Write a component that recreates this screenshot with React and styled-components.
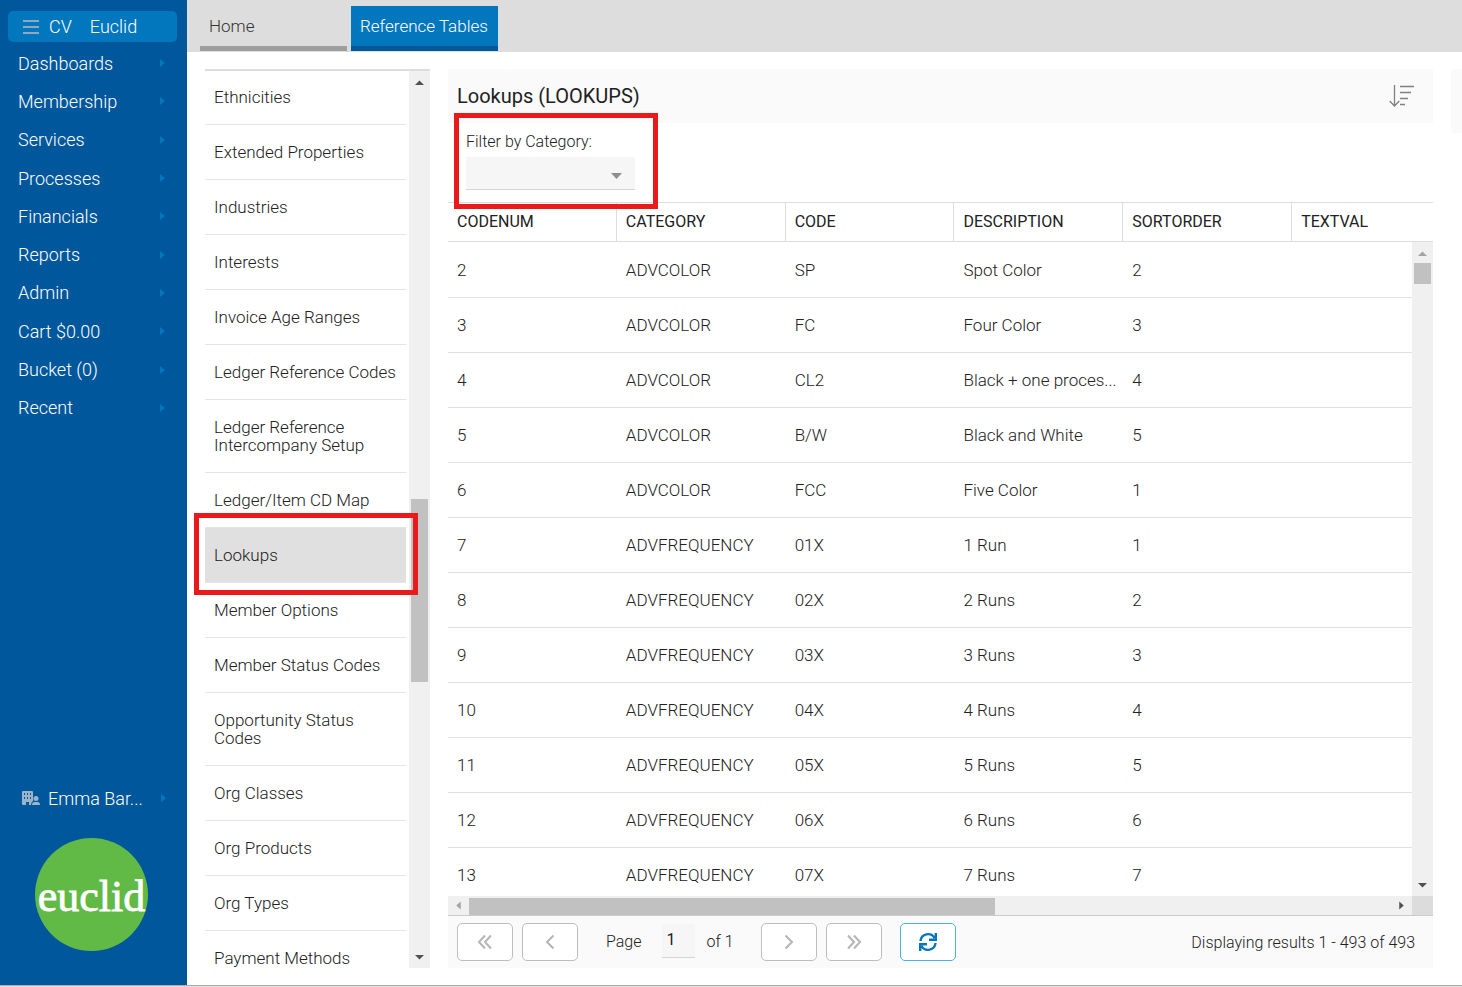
import React from "react";
import styled, { createGlobalStyle } from "styled-components";

const Global = createGlobalStyle`
  * { box-sizing: border-box; }
  body { margin: 0; background: #e6dcdc; color: #212121; font-family: Roboto, "Liberation Sans", sans-serif; font-size: 17px; font-weight: 300; }
  button, input, select { font: inherit; color: inherit; margin: 0; padding: 0; border: 0; background: none; border-radius: 0; }
  button { cursor: pointer; }
  a { color: inherit; text-decoration: none; }
  ul { list-style: none; margin: 0; padding: 0; }
`;

const Shell = styled.div`
  display: flex;
  height: calc(100vh - 1px);
  overflow: hidden;
  background: #fff;
  border-bottom: 1px solid #b0abab;
`;

const Sidebar = styled.nav`
  flex: 0 0 187px;
  display: flex;
  flex-direction: column;
  padding: 11px 10px 34px 8px;
  background: #01579b;
  color: #fff;
  font-size: 18px;
`;

const Brand = styled.button`
  display: flex;
  align-items: center;
  height: 31px;
  padding-left: 15px;
  border-radius: 5px;
  background: #0277bd;
  & > svg { margin-right: 10px; }
  & > span + span { margin-left: 18px; }
`;

const Menu = styled.ul`
  display: grid;
  grid-template-rows: repeat(10, 1fr);
  height: 383px;
  margin-top: 2px;
`;

const MenuLink = styled.a`
  display: flex;
  align-items: center;
  height: 100%;
  padding: 0 12px 0 10px;
  & > span { flex: 1; }
`;

const UserLink = styled(MenuLink)`
  height: 38px;
  margin-top: auto;
  padding: 0 11px 0 14px;
  & > svg:first-child { margin-right: 8px; }
`;

const Logo = styled.svg`
  display: block;
  flex: none;
  width: 113px;
  height: 113px;
  margin: 21px 0 0 27px;
`;

const Content = styled.main`
  flex: 1;
  min-width: 0;
  display: flex;
  flex-direction: column;
`;

const TabBar = styled.div`
  display: flex;
  flex: 0 0 52px;
  gap: 4px;
  padding: 6px 13px 1px;
  background: #ddd;
`;

const Tab = styled.button`
  width: 147px;
  padding: 0 9px;
  text-align: left;
  white-space: nowrap;
  border-bottom: 5px solid ${(p) => (p.$active ? "#01579b" : "#9e9e9e")};
  background: ${(p) => (p.$active ? "#0277bd" : "transparent")};
  color: ${(p) => (p.$active ? "#fff" : "#333")};
`;

const Workspace = styled.div`
  flex: 1;
  min-height: 0;
  display: flex;
  gap: 18px;
  padding: 17px 0 17px 18px;
`;

const ListPanel = styled.aside`
  position: relative;
  flex: 0 0 225px;
  display: flex;
  border-top: 2px solid #ddd;
`;

const TableList = styled.ul`
  flex: 1;
  overflow: hidden;
  margin-right: 3px;
  & > li:first-child > a { padding-top: 17px; }
`;

const ListLink = styled.a`
  display: block;
  padding: 18px 9px;
  line-height: 18px;
  border-bottom: 1px solid #e4e4e4;
  background: ${(p) => (p.$active ? "#e0e0e0" : "transparent")};
`;

const Track = styled.div`
  flex: 0 0 21px;
  display: flex;
  flex-direction: column;
  align-items: center;
  justify-content: space-between;
  background: #f0f0f0;
`;

const Arrow = styled.svg`
  flex: none;
  display: block;
  width: 21px;
  height: 21px;
  fill: ${(p) => (p.$dim ? "#a3a3a3" : "#505050")};
`;

const Travel = styled.div`
  flex: 1;
  width: 17px;
  padding-top: ${(p) => p.$offset}px;
`;

const Thumb = styled.div`
  height: ${(p) => p.$size}px;
  background: #c1c1c1;
`;

const Panel = styled.section`
  flex: 1;
  min-width: 0;
  display: flex;
  flex-direction: column;
`;

const NextPanel = styled.div`
  flex: 0 0 11px;
  height: 64px;
  background: #fafafa;
`;

const PanelHeader = styled.header`
  flex: 0 0 54px;
  display: flex;
  align-items: center;
  justify-content: space-between;
  padding: 0 18px 0 9px;
  background: #fafafa;
`;

const SortButton = styled.button`
  display: grid;
  place-items: center;
`;

const Title = styled.h1`
  margin: 0;
  font-size: 20px;
  font-weight: 400;
`;

const Filter = styled.div`
  position: relative;
  flex: 0 0 79px;
  display: flex;
  flex-direction: column;
  align-items: flex-start;
  gap: 5px;
  padding: 9px 18px 0;
  & > label { font-size: 16px; line-height: 20px; }
`;

const SelectBox = styled.div`
  position: relative;
  width: 169px;
  & > select { display: block; width: 100%; height: 33px; appearance: none; background: #f6f6f6; border-bottom: 1px solid #d5d5d5; }
  & > svg { position: absolute; right: 13px; top: 16px; pointer-events: none; }
`;

const Highlight = styled.div`
  position: absolute;
  z-index: 3;
  top: ${(p) => p.$top}px;
  left: ${(p) => p.$left}px;
  width: ${(p) => p.$width}px;
  height: ${(p) => p.$height}px;
  border: 5px solid #e81a1c;
  pointer-events: none;
`;

const GridViewport = styled.div`
  position: relative;
  flex: 1;
  min-height: 0;
  overflow: hidden;
  border-top: 1px solid #ddd;
`;

const DataTable = styled.table`
  width: calc(100% + 28px);
  table-layout: fixed;
  border-collapse: separate;
  border-spacing: 0;
`;

const HeadCell = styled.th`
  height: 39px;
  padding: 0 9px 2px;
  text-align: left;
  font-size: 16px;
  font-weight: 400;
  border-bottom: 1px solid #ddd;
  border-right: 1px solid #ddd;
`;

const Cell = styled.td`
  height: 55px;
  padding: 0 0 0 9px;
  white-space: nowrap;
  border-bottom: 1px solid #e0e0e0;
  tr:first-child > & { height: 56px; padding-top: 1px; }
`;

const VerticalScroll = styled(Track)`
  position: absolute;
  top: 39px;
  right: 0;
  bottom: 0;
  width: 21px;
`;

const HorizontalScroll = styled.div`
  flex: 0 0 20px;
  display: flex;
  align-items: stretch;
  background: #f0f0f0;
  border-bottom: 1px solid #ccc;
  & > svg { height: 19px; }
`;

const HorizontalTravel = styled.div`
  flex: 1;
  padding-top: 2px;
`;

const HorizontalThumb = styled.div`
  width: 57%;
  height: 17px;
  background: #c1c1c1;
`;

const Corner = styled.div`
  flex: 0 0 21px;
  background: #dcdcdc;
`;

const Pager = styled.footer`
  flex: 0 0 52px;
  display: flex;
  align-items: center;
  padding: 0 18px 0 9px;
  background: #fafafa;
  font-size: 16px;
`;

const ButtonPair = styled.div`
  display: flex;
  gap: 9px;
`;

const PagerButton = styled.button`
  display: grid;
  place-items: center;
  width: 56px;
  height: 38px;
  border: 1px solid ${(p) => (p.$primary ? "#4db1e2" : "#bdbdbd")};
  border-radius: 5px;
  background: #fff;
  color: ${(p) => (p.$primary ? "#0277bd" : "#b5b5b5")};
`;

const PageField = styled.div`
  display: flex;
  align-items: center;
  margin: 0 28px 2px;
  & > input { width: 33px; height: 34px; margin: 0 12px 0 20px; padding: 0 0 2px 5px; background: #f6f6f6; border-bottom: 1px solid #d5d5d5; font-weight: 400; }
  & > span { margin-right: -1px; }
`;

const Refresh = styled.div`
  margin-left: 18px;
`;

const Results = styled.span`
  margin-left: auto;
`;

const Caret = () => (
  <svg width="5" height="8" viewBox="0 0 5 8" aria-hidden="true"><path d="M0 0L5 4L0 8Z" fill="#0277bd" /></svg>
);

const arrows = {
  up: "M6 14L10.5 9.5L15 14Z",
  down: "M6 8L10.5 12.5L15 8Z",
  left: "M13 6L8 10.5L13 15Z",
  right: "M8 6L13 10.5L8 15Z",
};

const ScrollArrow = ({ dir, dim }) => (
  <Arrow $dim={dim} viewBox="0 0 21 21" aria-hidden="true"><path d={arrows[dir]} /></Arrow>
);

const Chevron = ({ double, flip }) => (
  <svg width="16" height="16" viewBox="0 0 16 16" fill="none" stroke="currentColor" strokeWidth="2" aria-hidden="true">
    <g transform={flip ? "rotate(180 8 8)" : undefined}>
      {double ? <path d="M8 1.5L2 8L8 14.5M14 1.5L8 8L14 14.5" /> : <path d="M11.500 1.5L5 8L11.500 14.5" />}
    </g>
  </svg>
);

const menu = ["Dashboards", "Membership", "Services", "Processes", "Financials", "Reports", "Admin", "Cart $0.00", "Bucket (0)", "Recent"];

const tables = [
  "Ethnicities", "Extended Properties", "Industries", "Interests", "Invoice Age Ranges", "Ledger Reference Codes",
  "Ledger Reference Intercompany Setup", "Ledger/Item CD Map", "Lookups", "Member Options", "Member Status Codes",
  "Opportunity Status Codes", "Org Classes", "Org Products", "Org Types", "Payment Methods",
];

const columns = ["CODENUM", "CATEGORY", "CODE", "DESCRIPTION", "SORTORDER", "TEXTVAL"];

const rows = [
  ["2", "ADVCOLOR", "SP", "Spot Color", "2"],
  ["3", "ADVCOLOR", "FC", "Four Color", "3"],
  ["4", "ADVCOLOR", "CL2", "Black + one proces...", "4"],
  ["5", "ADVCOLOR", "B/W", "Black and White", "5"],
  ["6", "ADVCOLOR", "FCC", "Five Color", "1"],
  ["7", "ADVFREQUENCY", "01X", "1 Run", "1"],
  ["8", "ADVFREQUENCY", "02X", "2 Runs", "2"],
  ["9", "ADVFREQUENCY", "03X", "3 Runs", "3"],
  ["10", "ADVFREQUENCY", "04X", "4 Runs", "4"],
  ["11", "ADVFREQUENCY", "05X", "5 Runs", "5"],
  ["12", "ADVFREQUENCY", "06X", "6 Runs", "6"],
  ["13", "ADVFREQUENCY", "07X", "7 Runs", "7"],
];

export default function App() {
  return (
    <>
      <Global />
      <Shell>
        <Sidebar>
          <Brand type="button">
            <svg width="16" height="14" viewBox="0 0 16 14" stroke="#8fa9c0" strokeWidth="2" aria-hidden="true"><path d="M0 1H16M0 7H16M0 13H16" /></svg>
            <span>CV</span><span>Euclid</span>
          </Brand>
          <Menu>
            {menu.map((m) => (
              <li key={m}><MenuLink href="#"><span>{m}</span><Caret /></MenuLink></li>
            ))}
          </Menu>
          <UserLink href="#">
            <svg width="18" height="15" viewBox="0 0 18 15" fill="#9cb3c9" aria-hidden="true">
              <path fillRule="evenodd" d="M1 0H10Q11 0 11 1V10Q9 11 9 14H7V11H4V14H1Q0 14 0 13V1Q0 0 1 0ZM2 2V4H3V2ZM5 2V4H6V2ZM8 2V4H9V2ZM2 6V8H3V6ZM5 6V8H6V6ZM8 6V8H9V6Z" />
              <circle cx="14" cy="7.500" r="2.500" /><path d="M10 14Q10 11 12.500 11H15.500Q18 11 18 14Z" />
            </svg>
            <span>Emma Bar...</span><Caret />
          </UserLink>
          <Logo viewBox="0 0 113 113" role="img" aria-label="euclid">
            <circle cx="56.500" cy="56.500" r="56.500" fill="#61ba46" />
            <text x="56.500" y="73" textAnchor="middle" fontFamily="Liberation Serif, serif" fontSize="44" fontWeight="400" fill="#fff" stroke="#fff" strokeWidth="0.8">euclid</text>
          </Logo>
        </Sidebar>
        <Content>
          <TabBar role="tablist">
            <Tab type="button" role="tab">Home</Tab>
            <Tab type="button" role="tab" aria-selected="true" $active>Reference Tables</Tab>
          </TabBar>
          <Workspace>
            <ListPanel>
              <TableList>
                {tables.map((t) => (
                  <li key={t}><ListLink href="#" $active={t === "Lookups"}>{t}</ListLink></li>
                ))}
              </TableList>
              <Track aria-hidden="true">
                <ScrollArrow dir="up" />
                <Travel $offset={407}><Thumb $size={183} /></Travel>
                <ScrollArrow dir="down" />
              </Track>
              <Highlight $top={442} $left={-11} $width={224} $height={82} />
            </ListPanel>
            <Panel>
              <PanelHeader>
                <Title>Lookups (LOOKUPS)</Title>
                <SortButton type="button" aria-label="Sort">
                  <svg width="26" height="22" viewBox="0 0 26 22" fill="none" stroke="#808080" strokeWidth="1.300" aria-hidden="true"><path d="M5.500 0V21M0.700 16L5.500 21L10.300 16M11 1.500H25M11 7.500H22M11 13.500H19M11 19.500H16" /></svg>
                </SortButton>
              </PanelHeader>
              <Filter>
                <label htmlFor="category">Filter by Category:</label>
                <SelectBox>
                  <select id="category" defaultValue=""><option value="" /></select>
                  <svg width="11" height="6" viewBox="0 0 11 6" fill="#8f8f8f" aria-hidden="true"><path d="M0 0H11L5.500 6Z" /></svg>
                </SelectBox>
                <Highlight $top={-10} $left={6} $width={204} $height={96} />
              </Filter>
              <GridViewport>
                <DataTable>
                  <thead><tr>{columns.map((c) => <HeadCell key={c} scope="col">{c}</HeadCell>)}</tr></thead>
                  <tbody>
                    {rows.map((r) => (
                      <tr key={r[0]}>
                        {r.map((v, i) => <Cell key={i}>{v}</Cell>)}
                        <Cell />
                      </tr>
                    ))}
                  </tbody>
                </DataTable>
                <VerticalScroll aria-hidden="true">
                  <ScrollArrow dir="up" dim />
                  <Travel $offset={0}><Thumb $size={21} /></Travel>
                  <ScrollArrow dir="down" />
                </VerticalScroll>
              </GridViewport>
              <HorizontalScroll aria-hidden="true">
                <ScrollArrow dir="left" dim />
                <HorizontalTravel><HorizontalThumb /></HorizontalTravel>
                <ScrollArrow dir="right" />
                <Corner />
              </HorizontalScroll>
              <Pager>
                <ButtonPair>
                  <PagerButton type="button" aria-label="First page"><Chevron double /></PagerButton>
                  <PagerButton type="button" aria-label="Previous page"><Chevron /></PagerButton>
                </ButtonPair>
                <PageField>
                  <label htmlFor="page">Page</label>
                  <input id="page" type="text" defaultValue="1" />
                  <span>of 1</span>
                </PageField>
                <ButtonPair>
                  <PagerButton type="button" aria-label="Next page"><Chevron flip /></PagerButton>
                  <PagerButton type="button" aria-label="Last page"><Chevron double flip /></PagerButton>
                </ButtonPair>
                <Refresh>
                  <PagerButton type="button" aria-label="Refresh" $primary>
                    <svg width="20" height="20" viewBox="0 0 20 20" fill="none" stroke="currentColor" strokeWidth="2.400" aria-hidden="true"><path d="M2.500 9A7.500 7.500 0 0 1 16.500 6M17.500 11A7.500 7.500 0 0 1 3.500 14M17.800 1V7.800H11M2.200 19V12.200H9" /></svg>
                  </PagerButton>
                </Refresh>
                <Results>Displaying results 1 - 493 of 493</Results>
              </Pager>
            </Panel>
            <NextPanel />
          </Workspace>
        </Content>
      </Shell>
    </>
  );
}
